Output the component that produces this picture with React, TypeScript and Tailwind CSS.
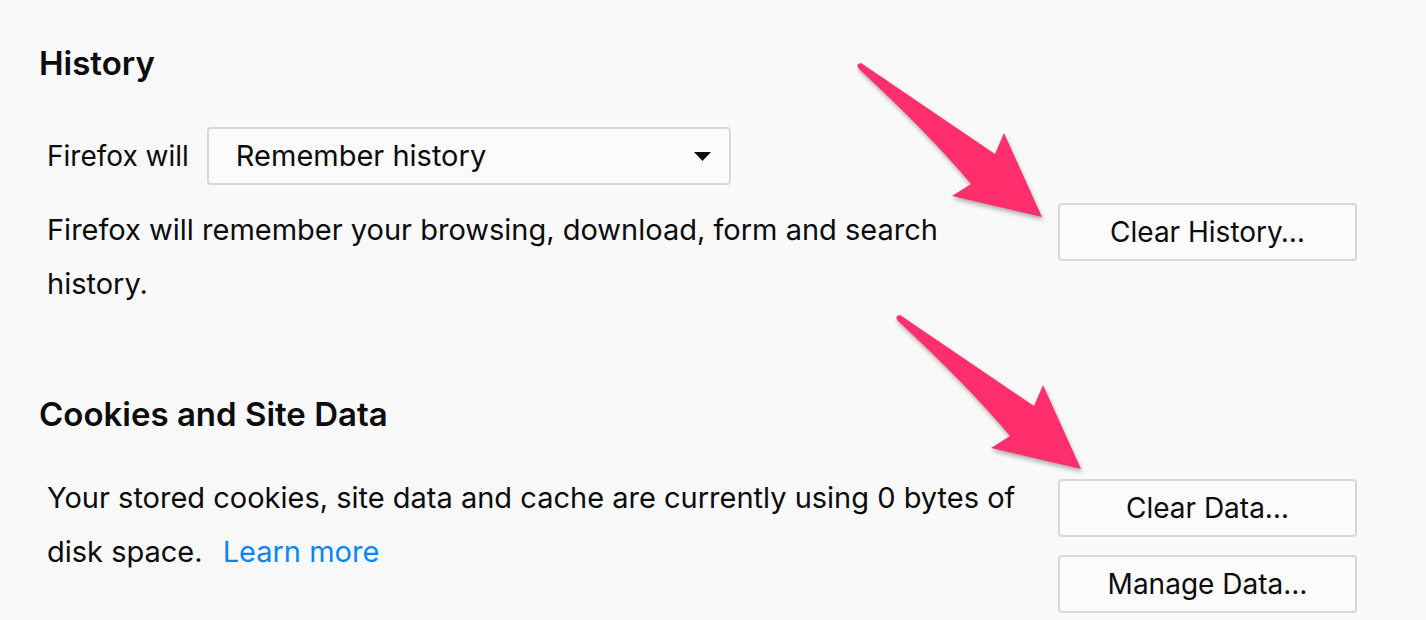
import React from 'react';

const font = { fontFamily: 'Inter, "Noto Sans", sans-serif' };

const PrefButton: React.FC<{ label: string; className?: string }> = ({ label, className = '' }) => (
  <button
    className={`w-[299px] h-[58px] rounded-[4px] border-2 border-[#d7d7db] bg-[#fbfbfb] text-[28px] text-[#0c0c0d] ${className}`}
  >
    {label}
  </button>
);

const Arrow: React.FC<{ dx: number; dy: number }> = ({ dx, dy }) => (
  <path
    transform={`translate(${dx} ${dy})`}
    d="M 861 63 L 995 154 L 1004 133 L 1042 217 L 952 196 L 971 184 Q 930 135 859 69 Q 855 64 861 63 Z"
    fill="#ff2f6e"
  />
);

export default function App() {
  return (
    <div className="relative w-[1426px] h-[620px] overflow-hidden bg-[#f9f9fa] text-[#0c0c0d]" style={font}>
      <div className="pl-[39px] pr-[69px] pt-[43px]">
        {/* History */}
        <h2 className="text-[33px] leading-[40px] font-semibold">History</h2>
        <div className="mt-[44px] ml-[8px] flex items-center gap-[18px]">
          <span className="text-[28px]">Firefox will</span>
          <div className="w-[524px] h-[58px] rounded-[4px] border-2 border-[#d7d7db] bg-[#fbfbfb] flex items-center justify-between pl-[27px] pr-[18px]">
            <span className="text-[29px]">Remember history</span>
            <svg width="17" height="9" viewBox="0 0 17 9">
              <path d="M0 0 H17 L8.5 9 Z" fill="#0c0c0d" />
            </svg>
          </div>
        </div>
        <div className="mt-[18px] ml-[8px] flex items-start justify-between">
          <p className="w-[975px] text-[29px] leading-[54px]">
            Firefox will remember your browsing, download, form and search history.
          </p>
          <PrefButton label="Clear History…" />
        </div>

        {/* Cookies and Site Data */}
        <h2 className="mt-[83px] text-[33px] leading-[40px] font-semibold">Cookies and Site Data</h2>
        <div className="mt-[37px] ml-[8px] flex items-start justify-between">
          <p className="w-[975px] text-[29px] leading-[54px]">
            Your stored cookies, site data and cache are currently using 0 bytes of disk space.
            <a className="ml-[20px] text-[#0a84ff]">Learn more</a>
          </p>
          <div className="mt-[8px] flex flex-col gap-[18px]">
            <PrefButton label="Clear Data…" />
            <PrefButton label="Manage Data…" />
          </div>
        </div>
      </div>

      {/* annotation arrows */}
      <svg
        className="absolute inset-0 pointer-events-none"
        width="1426"
        height="620"
        style={{ filter: 'drop-shadow(1px 3px 2px rgba(0,0,0,0.3))' }}
      >
        <Arrow dx={0} dy={0} />
        <Arrow dx={39} dy={252} />
      </svg>
    </div>
  );
}
